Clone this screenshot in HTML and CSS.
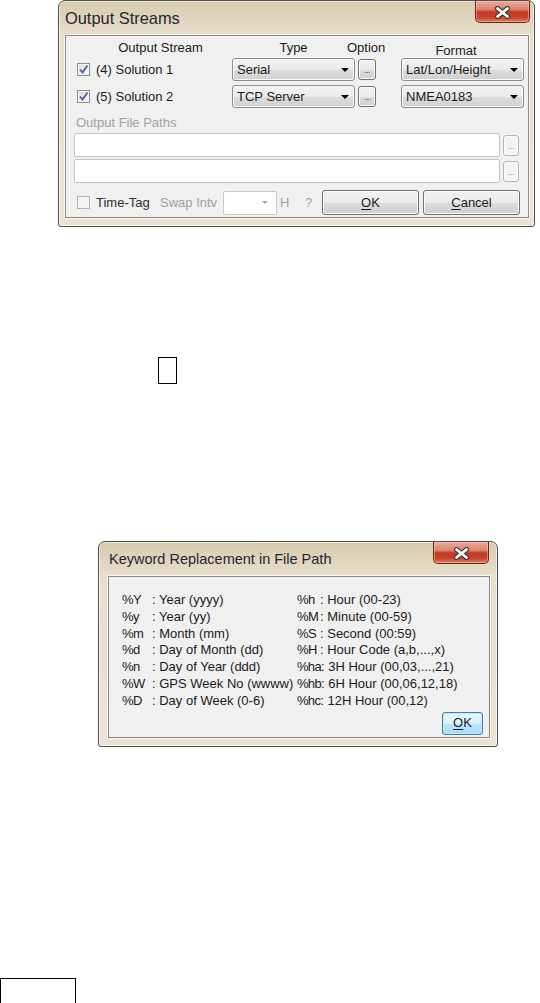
FILE: index.html
```html
<!DOCTYPE html>
<html lang="en">
<head>
  <meta charset="UTF-8">
  <title>Output Streams</title>
  <link rel="stylesheet" href="styles.css">
</head>
<body>
  <div class="window streams">
    <div class="titlebar">
      <span class="title">Output Streams</span>
      <span class="close-btn">
        <svg width="17" height="13" viewBox="0 0 17 13"><path d="M3.5 2.5 L13.5 10.5 M13.5 2.5 L3.5 10.5" stroke="#3a3a3a" stroke-width="5" stroke-linecap="round"/><path d="M3.5 2.5 L13.5 10.5 M13.5 2.5 L3.5 10.5" stroke="#fff" stroke-width="2.8" stroke-linecap="round"/></svg>
      </span>
    </div>
    <div class="panel">
      <div class="stream-grid">
        <div class="head head-stream">Output Stream</div>
        <div class="head">Type</div>
        <div class="head head-option">Option</div>
        <div class="head head-format">Format</div>

        <div class="check-row"><span class="checkbox"><svg width="11" height="11" viewBox="0 0 11 11"><path d="M2 5.5 L4.5 8.5 L9.5 1.5" fill="none" stroke="#4c5f98" stroke-width="1.8"/></svg></span>(4) Solution 1</div>
        <div class="combo">Serial<span class="arrow"></span></div>
        <div class="dots-btn">...</div>
        <div class="combo">Lat/Lon/Height<span class="arrow"></span></div>

        <div class="check-row"><span class="checkbox"><svg width="11" height="11" viewBox="0 0 11 11"><path d="M2 5.5 L4.5 8.5 L9.5 1.5" fill="none" stroke="#4c5f98" stroke-width="1.8"/></svg></span>(5) Solution 2</div>
        <div class="combo">TCP Server<span class="arrow"></span></div>
        <div class="dots-btn">...</div>
        <div class="combo">NMEA0183<span class="arrow"></span></div>
      </div>

      <div class="dim-label">Output File Paths</div>
      <div class="path-row">
        <div class="path-input"></div>
        <div class="dots-btn off">...</div>
      </div>
      <div class="path-row">
        <div class="path-input"></div>
        <div class="dots-btn off">...</div>
      </div>

      <div class="bottom-row">
        <span class="checkbox off"></span>
        <span class="tt-label">Time-Tag</span>
        <span class="dim swap-label">Swap Intv</span>
        <span class="combo small"><span class="arrow grey"></span></span>
        <span class="dim h-label">H</span>
        <span class="dim q-label">?</span>
        <span class="btn"><u>O</u>K</span>
        <span class="btn cancel"><u>C</u>ancel</span>
      </div>
    </div>
  </div>

  <div class="marker"></div>

  <div class="window keywords">
    <div class="titlebar">
      <span class="title">Keyword Replacement in File Path</span>
      <span class="close-btn">
        <svg width="17" height="13" viewBox="0 0 17 13"><path d="M3.5 2.5 L13.5 10.5 M13.5 2.5 L3.5 10.5" stroke="#3a3a3a" stroke-width="5" stroke-linecap="round"/><path d="M3.5 2.5 L13.5 10.5 M13.5 2.5 L3.5 10.5" stroke="#fff" stroke-width="2.8" stroke-linecap="round"/></svg>
      </span>
    </div>
    <div class="panel">
      <div class="key-grid">
        <div class="kw"><span class="key">%Y</span>: Year (yyyy)</div>
        <div class="kw"><span class="key">%y</span>: Year (yy)</div>
        <div class="kw"><span class="key">%m</span>: Month (mm)</div>
        <div class="kw"><span class="key">%d</span>: Day of Month (dd)</div>
        <div class="kw"><span class="key">%n</span>: Day of Year (ddd)</div>
        <div class="kw"><span class="key">%W</span>: GPS Week No (wwww)</div>
        <div class="kw"><span class="key">%D</span>: Day of Week (0-6)</div>

        <div class="kw"><span class="key short">%h</span>: Hour (00-23)</div>
        <div class="kw"><span class="key short">%M</span>: Minute (00-59)</div>
        <div class="kw"><span class="key short">%S</span>: Second (00:59)</div>
        <div class="kw"><span class="key short">%H</span>: Hour Code (a,b,...,x)</div>
        <div class="kw"><span class="key tight">%ha</span>: 3H Hour (00,03,...,21)</div>
        <div class="kw"><span class="key tight">%hb</span>: 6H Hour (00,06,12,18)</div>
        <div class="kw"><span class="key tight">%hc</span>: 12H Hour (00,12)</div>
      </div>
      <div class="ok-row">
        <span class="btn default"><u>O</u>K</span>
      </div>
    </div>
  </div>

  <div class="marker wide"></div>
</body>
</html>
```

FILE: styles.css
```css
* {
  box-sizing: border-box;
}

body {
  margin: 0;
  background-color: #ffffff;
  color: #1b1b1b;
  font-family: "Liberation Sans", Arial, sans-serif;
  font-size: 13px;
  line-height: 16px;
}

/* window frame */
.window {
  border: 1px solid #4f4f4f;
  border-radius: 7px 7px 3px 3px;
  background: linear-gradient(#d8cbae, #e7dfcc 34px, #ebe4d5);
  box-shadow: inset 0 0 0 1px rgba(255, 255, 255, 0.55);
}

.titlebar {
  display: flex;
  justify-content: space-between;
  align-items: flex-start;
  height: 34px;
}

.title {
  color: #1c2634;
}

.close-btn {
  display: flex;
  align-items: center;
  justify-content: center;
  width: 55px;
  height: 22px;
  padding-top: 2px;
  border: 1px solid #6a2619;
  border-top: none;
  border-radius: 0 0 5px 5px;
  background: linear-gradient(#eaa899 0%, #d98470 40%, #c33b22 52%, #c6432a 78%, #de8466 100%);
  box-shadow: inset 0 0 0 1px rgba(255, 210, 200, 0.45);
}

.panel {
  background-color: #f0f0f0;
  border: 1px solid #8e8a80;
  box-shadow: 0 0 0 1px #f8f5ee;
}

/* Output Streams */
.streams {
  width: 477px;
  margin-left: 58px;
  padding: 0 5px 8px 6px;
}

.streams .title {
  font-size: 16.4px;
  line-height: 20px;
  padding: 7px 0 0 0;
}

.streams .close-btn {
  margin-right: -1px;
}

.streams .panel {
  padding: 4px 8px 2px 8px;
}

.stream-grid {
  display: grid;
  grid-template-columns: 155px 123px 46px 123px;
  grid-template-rows: 18px 27px 23px;
  margin-left: 3px;
}

.head {
  text-align: center;
  height: 16px;
}

.head-stream {
  padding-left: 12px;
}

.head-option {
  justify-self: start;
  margin-left: -8px;
}

.head-format {
  padding: 3px 13px 0 0;
}

.check-row {
  display: flex;
  align-items: center;
  gap: 6px;
  height: 23px;
}

.checkbox {
  display: flex;
  align-items: center;
  justify-content: center;
  flex: none;
  width: 13px;
  height: 13px;
  border: 1px solid #8e8f8f;
  background: linear-gradient(135deg, #dcdcdc, #fbfbfb);
  box-shadow: inset 0 0 0 1px #f4f4f4;
}

.checkbox.off {
  border-color: #b4b4b4;
  background: #f4f4f4;
}

.combo {
  display: flex;
  align-items: center;
  justify-content: space-between;
  height: 23px;
  padding: 0 5px 0 4px;
  border: 1px solid #8c8c8c;
  border-radius: 3px;
  background: linear-gradient(#f3f3f3 0%, #ebebeb 50%, #dddddd 51%, #d0d0d0 100%);
  box-shadow: inset 0 0 0 1px #fbfbfb;
}

.arrow {
  width: 0;
  height: 0;
  border-left: 4px solid transparent;
  border-right: 4px solid transparent;
  border-top: 4px solid #000;
}

.arrow.grey {
  border-left-width: 3px;
  border-right-width: 3px;
  border-top: 3px solid #a8a8a8;
}

.dots-btn {
  display: flex;
  align-items: flex-end;
  justify-content: center;
  width: 18px;
  height: 21px;
  margin: 1px 0 0 3px;
  padding-bottom: 4px;
  border: 1px solid #707070;
  border-radius: 3px;
  background: linear-gradient(#f3f3f3, #ebebeb 50%, #dddddd 51%, #d0d0d0);
  box-shadow: inset 0 0 0 1px #fbfbfb;
  color: #4a3b7a;
  font-size: 9px;
  line-height: 9px;
  letter-spacing: -0.5px;
}

.dots-btn.off {
  width: 16px;
  height: 21px;
  margin: 0;
  border-color: #b5b8bb;
  background: #f4f4f4;
  color: #9a9a9a;
}

.dim-label,
.dim {
  color: #a2a2a2;
}

.dim-label {
  margin: 7px 0 0 2px;
}

.path-row {
  display: flex;
  align-items: center;
  gap: 3px;
  margin-top: 2px;
}

.path-input {
  width: 426px;
  height: 24px;
  border: 1px solid #c4c4c4;
  border-radius: 2px;
  background-color: #ffffff;
}

.bottom-row {
  display: flex;
  align-items: center;
  height: 25px;
  margin: 7px 0 0 3px;
}

.bottom-row > span {
  flex: none;
}

.tt-label {
  width: 70px;
  padding-left: 6px;
  color: #2e2e2e;
}

.swap-label {
  width: 63px;
}

.combo.small {
  width: 54px;
  height: 24px;
  justify-content: flex-end;
  padding-right: 8px;
  border-color: #c9c9c9;
  border-radius: 2px;
  background: #ffffff;
  box-shadow: none;
}

.h-label {
  width: 28px;
  padding-left: 3px;
}

.q-label {
  width: 17px;
}

.btn {
  display: flex;
  align-items: center;
  justify-content: center;
  width: 97px;
  height: 25px;
  border: 1px solid #707070;
  border-radius: 3px;
  background: linear-gradient(#f2f2f2, #ebebeb 50%, #dddddd 51%, #cfcfcf);
  box-shadow: inset 0 0 0 1px #fcfcfc;
}

.btn u {
  text-decoration-thickness: 1px;
  text-underline-offset: 2px;
}

.btn.cancel {
  margin-left: 4px;
}

/* Keyword Replacement */
.keywords {
  width: 400px;
  margin: 157px 0 0 98px;
  padding: 0 7px 8px 9px;
}

.keywords .title {
  font-size: 14.5px;
  line-height: 18px;
  padding: 8px 0 0 1px;
}

.keywords .close-btn {
  width: 56px;
  margin-right: 1px;
}

.keywords .panel {
  padding: 15px 6px 2px 13px;
}

.key-grid {
  display: grid;
  grid-template-columns: 175px 1fr;
  grid-template-rows: repeat(7, 16.8px);
  grid-auto-flow: column;
  line-height: 16.8px;
  white-space: nowrap;
}

.key {
  display: inline-block;
  width: 30px;
  letter-spacing: -0.5px;
}

.key.short {
  width: 23px;
}

.key.tight {
  width: auto;
  letter-spacing: -0.7px;
}

.ok-row {
  display: flex;
  justify-content: flex-end;
  margin-top: 2px;
}

.btn.default {
  width: 41px;
  height: 23px;
  border-color: #3c7fb1;
  background: linear-gradient(#eaf6fd, #d9f0fc 50%, #bee6fd 51%, #a7d9f5);
  box-shadow: inset 0 0 0 1px #c6e8fa;
}

/* stray frames */
.marker {
  width: 19px;
  height: 27px;
  margin: 130px 0 0 158px;
  border: 1px solid #000;
}

.marker.wide {
  width: 76px;
  height: 26px;
  margin: 231px 0 0 0;
}
```
